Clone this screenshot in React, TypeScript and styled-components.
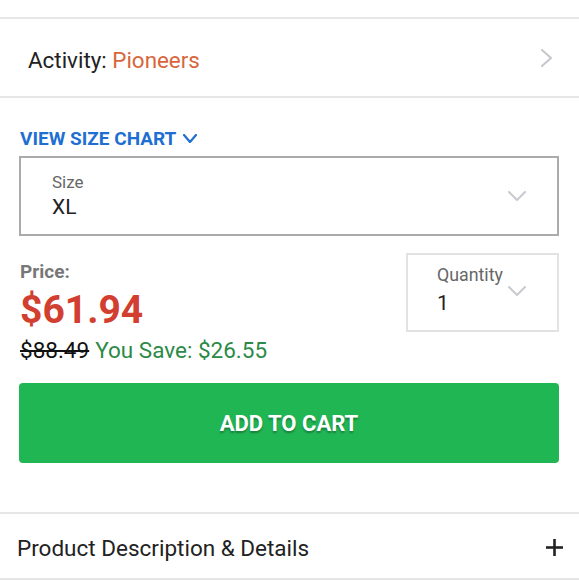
import React from 'react'
import styled, { createGlobalStyle } from 'styled-components'

const GlobalStyle = createGlobalStyle`
  body {
    margin: 0;
    background: #fff;
    font-family: Roboto, "Liberation Sans", sans-serif;
    color: #222;
  }
`

const Page = styled.div`
  width: 579px;
  height: 580px;
  overflow: hidden;
`

const TopSpacer = styled.div`
  height: 17px;
  border-bottom: 2px solid #e6e6e6;
`

const ActivityRow = styled.div`
  box-sizing: border-box;
  height: 79px;
  display: flex;
  align-items: center;
  justify-content: space-between;
  padding: 4px 27px 0 28px;
  border-bottom: 2px solid #e6e6e6;
  font-size: 22.4px;
`

const Accent = styled.span`
  color: #d8663d;
`

const ActivityChevron = styled.span`
  display: flex;
  margin-top: -4px;
`

const Options = styled.div`
  padding: 29px 20px 0 19px;
`

const ChartLink = styled.div`
  display: flex;
  align-items: center;
  gap: 7px;
  padding-left: 1px;
  height: 22px;
  color: #1f6fd2;
  font-size: 19px;
  font-weight: 700;
`

const SelectBox = styled.div<{ $light?: boolean }>`
  box-sizing: border-box;
  display: flex;
  align-items: center;
  justify-content: space-between;
  border: 2px solid ${p => (p.$light ? '#e2e2e2' : '#ababab')};
  background: #fff;
`

const SizeBox = styled(SelectBox)`
  margin-top: 7px;
  height: 80px;
  padding: 0 31px 0 31px;
`

const QuantityBox = styled(SelectBox)`
  width: 153px;
  height: 79px;
  padding: 0 31px 4px 29px;
`

const Field = styled.div`
  display: flex;
  flex-direction: column;
`

const FieldLabel = styled.span<{ $size?: number }>`
  font-size: ${p => p.$size ?? 17}px;
  color: #666;
  line-height: 22px;
`

const FieldValue = styled.span<{ $gap?: number }>`
  font-size: 21px;
  color: #222;
  line-height: 28px;
  margin-top: ${p => p.$gap ?? 0}px;
`

const PriceRow = styled.div`
  display: flex;
  justify-content: space-between;
  align-items: flex-start;
  margin-top: 17px;
`

const PriceBlock = styled.div`
  display: flex;
  flex-direction: column;
  padding-left: 1px;
`

const PriceLabel = styled.span`
  font-size: 19px;
  font-weight: 700;
  color: #777;
  line-height: 22px;
  margin-top: 8px;
`

const Price = styled.span`
  font-size: 39px;
  font-weight: 700;
  color: #d23f31;
  line-height: 52px;
  margin-top: 1px;
`

const SaveLine = styled.span`
  font-size: 22.5px;
  line-height: 28px;
  color: #2b8a46;
`

const OldPrice = styled.s`
  color: #111;
  margin-right: 6px;
`

const CartButton = styled.button`
  display: block;
  width: 100%;
  height: 80px;
  margin-top: 19px;
  border: none;
  border-radius: 4px;
  background: #20b654;
  color: #fff;
  font-family: Roboto, "Liberation Sans", sans-serif;
  font-size: 22px;
  font-weight: 700;
  text-shadow: 0 2px 2px rgba(0, 0, 0, 0.3);
  cursor: pointer;
`

const DetailsRow = styled.div`
  box-sizing: border-box;
  margin-top: 49px;
  height: 68px;
  display: flex;
  align-items: center;
  justify-content: space-between;
  padding: 3px 16px 0 17px;
  border-top: 2px solid #e6e6e6;
  border-bottom: 2px solid #e6e6e6;
  font-size: 22.5px;
  color: #222;
`

const Chevron = ({ w, h, color, dir = 'down', sw = 2 }: { w: number; h: number; color: string; dir?: 'down' | 'right'; sw?: number }) => (
  <svg width={w} height={h} viewBox={`0 0 ${w} ${h}`} fill="none" stroke={color} strokeWidth={sw} strokeLinecap="round" strokeLinejoin="round">
    {dir === 'down'
      ? <polyline points={`1,1 ${w / 2},${h - 1} ${w - 1},1`} />
      : <polyline points={`1,1 ${w - 1},${h / 2} 1,${h - 1}`} />}
  </svg>
)

export default function App() {
  return (
    <Page>
      <GlobalStyle />
      <TopSpacer />
      <ActivityRow>
        <span>Activity: <Accent>Pioneers</Accent></span>
        <ActivityChevron>
          <Chevron w={11} h={18} color="#c6c7cc" dir="right" />
        </ActivityChevron>
      </ActivityRow>
      <Options>
        <ChartLink>
          VIEW SIZE CHART
          <Chevron w={14} h={9} color="#1f6fd2" sw={2.2} />
        </ChartLink>
        <SizeBox>
          <Field>
            <FieldLabel>Size</FieldLabel>
            <FieldValue>XL</FieldValue>
          </Field>
          <Chevron w={18} h={10} color="#c9cad0" />
        </SizeBox>
        <PriceRow>
          <PriceBlock>
            <PriceLabel>Price:</PriceLabel>
            <Price>$61.94</Price>
            <SaveLine><OldPrice>$88.49</OldPrice>You Save: $26.55</SaveLine>
          </PriceBlock>
          <QuantityBox $light>
            <Field>
              <FieldLabel $size={17.8}>Quantity</FieldLabel>
              <FieldValue $gap={3}>1</FieldValue>
            </Field>
            <Chevron w={18} h={10} color="#c9cad0" />
          </QuantityBox>
        </PriceRow>
        <CartButton>ADD TO CART</CartButton>
      </Options>
      <DetailsRow>
        <span>Product Description &amp; Details</span>
        <svg width="17" height="17" viewBox="0 0 17 17" stroke="#222" strokeWidth="2.6">
          <line x1="0" y1="8.5" x2="17" y2="8.5" />
          <line x1="8.5" y1="0" x2="8.5" y2="17" />
        </svg>
      </DetailsRow>
    </Page>
  )
}
